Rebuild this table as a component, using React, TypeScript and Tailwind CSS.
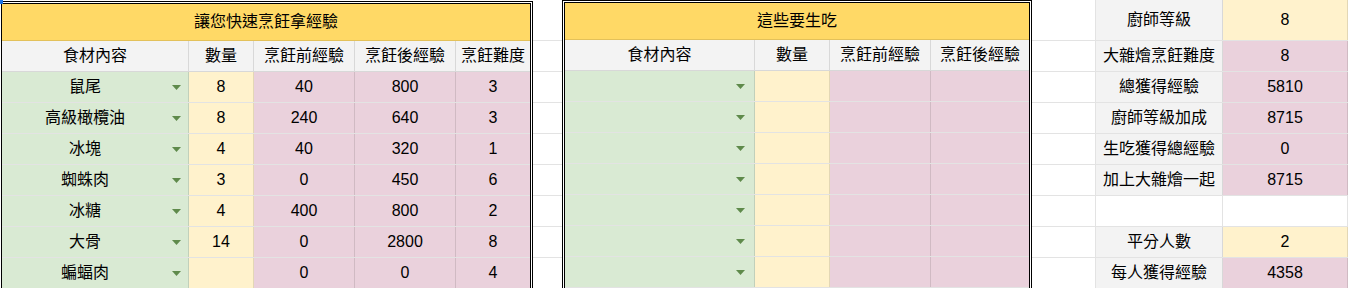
import React from "react";

const GRID = "border-[#0000001c]";

const LEFT_ROWS = [
  { name: "鼠尾", qty: "8", before: "40", after: "800", level: "3" },
  { name: "高級橄欖油", qty: "8", before: "240", after: "640", level: "3" },
  { name: "冰塊", qty: "4", before: "40", after: "320", level: "1" },
  { name: "蜘蛛肉", qty: "3", before: "0", after: "450", level: "6" },
  { name: "冰糖", qty: "4", before: "400", after: "800", level: "2" },
  { name: "大骨", qty: "14", before: "0", after: "2800", level: "8" },
  { name: "蝙蝠肉", qty: "", before: "0", after: "0", level: "4" },
];

const SUMMARY = [
  { label: "廚師等級", value: "8", tone: "yellow" },
  { label: "大雜燴烹飪難度", value: "8", tone: "pink" },
  { label: "總獲得經驗", value: "5810", tone: "pink" },
  { label: "廚師等級加成", value: "8715", tone: "pink" },
  { label: "生吃獲得總經驗", value: "0", tone: "pink" },
  { label: "加上大雜燴一起", value: "8715", tone: "pink" },
  { label: "", value: "", tone: "none" },
  { label: "平分人數", value: "2", tone: "yellow" },
  { label: "每人獲得經驗", value: "4358", tone: "pink" },
];

function Arrow({ gap }: { gap: string }) {
  return (
    <svg width="9" height="5" viewBox="0 0 9 5" className={`flex-none ml-1 ${gap}`}>
      <polygon points="0,0 9,0 4.5,5" fill="#5f8a4b" />
    </svg>
  );
}

function ChipCell({ name, width, gap }: { name: string; width: string; gap: string }) {
  return (
    <div className={`${width} flex-none h-full flex items-center bg-[#d9ead3] border-r ${GRID}`}>
      <span className="flex-1 text-center text-[16px]">{name}</span>
      <Arrow gap={gap} />
    </div>
  );
}

function NumCell({ value, width, bg, last }: { value: string; width: string; bg: string; last?: boolean }) {
  return (
    <div
      className={`${width} flex-none h-full flex items-center justify-center text-[16px] ${bg} ${last ? "" : `border-r ${GRID}`}`}
    >
      {value}
    </div>
  );
}

function HeaderCell({ label, width, last }: { label: string; width: string; last?: boolean }) {
  return (
    <div
      className={`${width} flex-none h-full flex items-center justify-center text-[16px] ${last ? "" : `border-r ${GRID}`}`}
    >
      {label}
    </div>
  );
}

function GapColumn({ width }: { width: string }) {
  return (
    <div className={`${width} flex-none flex flex-col`}>
      <div className={`h-[41px] border-b ${GRID}`} />
      {Array.from({ length: 8 }).map((_, i) => (
        <div key={i} className={`h-[31px] flex-none border-b ${GRID}`} />
      ))}
    </div>
  );
}

export default function App() {
  return (
    <div
      className="relative w-[1349px] h-[288px] overflow-hidden bg-white text-black flex items-start"
      style={{ fontFamily: '"Liberation Sans", "Noto Sans CJK TC", sans-serif' }}
    >
      {/* selection corner */}
      <div className="absolute left-0 top-0 w-[3px] h-[4px] bg-[#1a73e8] z-10" />

      {/* quick cook table */}
      <div className="-ml-px mt-px w-[534px] flex-none border-[3px] border-double border-black">
        <div className={`h-[37px] flex items-center justify-center bg-[#ffd966] border-b ${GRID} text-[16px]`}>
          讓您快速烹飪拿經驗
        </div>
        <div className={`h-[31px] flex bg-[#f3f3f3] border-b ${GRID}`}>
          <HeaderCell label="食材內容" width="w-[187px]" />
          <HeaderCell label="數量" width="w-[65px]" />
          <HeaderCell label="烹飪前經驗" width="w-[101px]" />
          <HeaderCell label="烹飪後經驗" width="w-[101px]" />
          <HeaderCell label="烹飪難度" width="w-[74px]" last />
        </div>
        {LEFT_ROWS.map((r) => (
          <div key={r.name} className={`h-[31px] flex border-b ${GRID}`}>
            <ChipCell name={r.name} width="w-[187px]" gap="mr-[7px]" />
            <NumCell value={r.qty} width="w-[65px]" bg="bg-[#fff2cc]" />
            <NumCell value={r.before} width="w-[101px]" bg="bg-[#ead1dc]" />
            <NumCell value={r.after} width="w-[101px]" bg="bg-[#ead1dc]" />
            <NumCell value={r.level} width="w-[74px]" bg="bg-[#ead1dc]" last />
          </div>
        ))}
      </div>

      <GapColumn width="w-[29px]" />

      {/* raw eat table */}
      <div className="w-[470px] flex-none border-[3px] border-double border-black">
        <div className={`h-[37px] flex items-center justify-center bg-[#ffd966] border-b ${GRID} text-[16px]`}>
          這些要生吃
        </div>
        <div className={`h-[31px] flex bg-[#f3f3f3] border-b ${GRID}`}>
          <HeaderCell label="食材內容" width="w-[190px]" />
          <HeaderCell label="數量" width="w-[75px]" />
          <HeaderCell label="烹飪前經驗" width="w-[101px]" />
          <HeaderCell label="烹飪後經驗" width="w-[98px]" last />
        </div>
        {Array.from({ length: 7 }).map((_, i) => (
          <div key={i} className={`h-[31px] flex border-b ${GRID}`}>
            <ChipCell name="" width="w-[190px]" gap="mr-[9px]" />
            <NumCell value="" width="w-[75px]" bg="bg-[#fff2cc]" />
            <NumCell value="" width="w-[101px]" bg="bg-[#ead1dc]" />
            <NumCell value="" width="w-[98px]" bg="bg-[#ead1dc]" last />
          </div>
        ))}
      </div>

      {/* summary */}
      <div className="flex-none flex flex-col">
        {SUMMARY.map((s, i) => (
          <div key={i} className={`${i === 0 ? "h-[41px]" : "h-[31px]"} flex-none flex border-b ${GRID}`}>
            <div className={`w-[64px] flex-none border-r ${GRID}`} />
            <div
              className={`w-[127px] flex-none flex items-center justify-center text-[16px] border-r ${GRID} ${
                s.tone === "none" ? "bg-white" : "bg-[#f3f3f3]"
              }`}
            >
              {s.label}
            </div>
            <div
              className={`w-[125px] flex-none flex items-center justify-center text-[16px] border-r ${GRID} ${
                s.tone === "yellow" ? "bg-[#fff2cc]" : s.tone === "pink" ? "bg-[#ead1dc]" : "bg-white"
              }`}
            >
              {s.value}
            </div>
          </div>
        ))}
      </div>
    </div>
  );
}
